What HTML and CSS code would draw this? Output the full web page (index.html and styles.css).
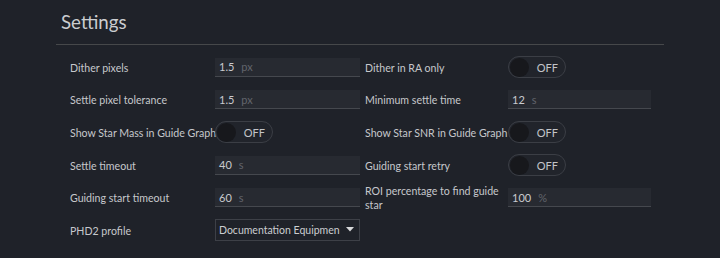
FILE: index.html
```html
<!DOCTYPE html>
<html lang="en">
<head>
    <meta charset="UTF-8">
    <title>Settings</title>
    <link rel="stylesheet" href="styles.css">
</head>
<body>
    <div class="panel">
        <h1 class="title">Settings</h1>
        <div class="settings-grid">
            <div class="setting">
                <label>Dither pixels</label>
                <div class="num-input"><span class="value">1.5</span><span class="unit">px</span></div>
            </div>
            <div class="setting right">
                <label>Dither in RA only</label>
                <div class="toggle"><span class="knob"></span><span class="toggle-text">OFF</span></div>
            </div>

            <div class="setting">
                <label>Settle pixel tolerance</label>
                <div class="num-input"><span class="value">1.5</span><span class="unit">px</span></div>
            </div>
            <div class="setting right">
                <label>Minimum settle time</label>
                <div class="num-input"><span class="value">12</span><span class="unit">s</span></div>
            </div>

            <div class="setting">
                <label>Show Star Mass in Guide Graph</label>
                <div class="toggle"><span class="knob"></span><span class="toggle-text">OFF</span></div>
            </div>
            <div class="setting right">
                <label>Show Star SNR in Guide Graph</label>
                <div class="toggle"><span class="knob"></span><span class="toggle-text">OFF</span></div>
            </div>

            <div class="setting">
                <label>Settle timeout</label>
                <div class="num-input"><span class="value">40</span><span class="unit">s</span></div>
            </div>
            <div class="setting right">
                <label>Guiding start retry</label>
                <div class="toggle"><span class="knob"></span><span class="toggle-text">OFF</span></div>
            </div>

            <div class="setting">
                <label>Guiding start timeout</label>
                <div class="num-input"><span class="value">60</span><span class="unit">s</span></div>
            </div>
            <div class="setting right">
                <label class="wrap">ROI percentage to find guide star</label>
                <div class="num-input"><span class="value">100</span><span class="unit">%</span></div>
            </div>

            <div class="setting">
                <label>PHD2 profile</label>
                <div class="select">
                    <span class="select-text">Documentation Equipmen</span>
                    <svg class="caret" width="8" height="5" viewBox="0 0 8 5"><path d="M0 0 L8 0 L4 4.5 Z" fill="#d8d9db"/></svg>
                </div>
            </div>
        </div>
    </div>
</body>
</html>
```

FILE: styles.css
```css
body {
    margin: 0;
    background-color: #1f2229;
    font-family: Lato, "Open Sans", sans-serif;
    color: #c6c8cc;
}

.panel {
    width: 608px;
    margin-left: 56px;
}

.title {
    font-weight: 400;
    font-size: 18.7px;
    line-height: 22px;
    margin: 0;
    padding: 11px 0 11px 5px;
    color: #cbcdd0;
    border-bottom: 1px solid #46484a;
}

.settings-grid {
    display: grid;
    grid-template-columns: 290px 286px;
    column-gap: 5px;
    grid-auto-rows: 32.6px;
    padding: 6px 0 0 14px;
}

.setting {
    display: grid;
    grid-template-columns: 145px 145px;
    align-items: center;
}

.setting.right {
    grid-template-columns: 143px 143px;
}

.setting label {
    font-size: 10.6px;
    line-height: 14px;
    padding-top: 1px;
    white-space: nowrap;
}

.setting label.wrap {
    white-space: normal;
}

.num-input {
    height: 18px;
    background: #272a31;
    border-bottom: 1px solid #45484e;
    display: flex;
    align-items: center;
    padding-left: 4px;
    font-size: 11px;
}

.num-input .value {
    color: #c9cbcf;
}

.num-input .unit {
    color: #62656c;
    margin-left: 7px;
}

.toggle {
    width: 48px;
    height: 20px;
    border: 1px solid #3b3e45;
    border-radius: 11px;
    background: #21242b;
    display: flex;
    align-items: center;
    justify-content: space-between;
    padding: 0 7px 0 1px;
}

.knob {
    width: 19px;
    height: 19px;
    border-radius: 50%;
    background: #17181c;
}

.toggle-text {
    font-size: 11px;
    color: #c3c5c9;
}

.select {
    height: 20px;
    border: 1px solid #3d4047;
    display: flex;
    align-items: center;
    padding: 0 5px 0 3px;
    font-size: 10.5px;
    color: #cbcdd0;
}

.select-text {
    flex: 1;
    white-space: nowrap;
}

.caret {
    flex-shrink: 0;
    margin-bottom: 2px;
}
```
